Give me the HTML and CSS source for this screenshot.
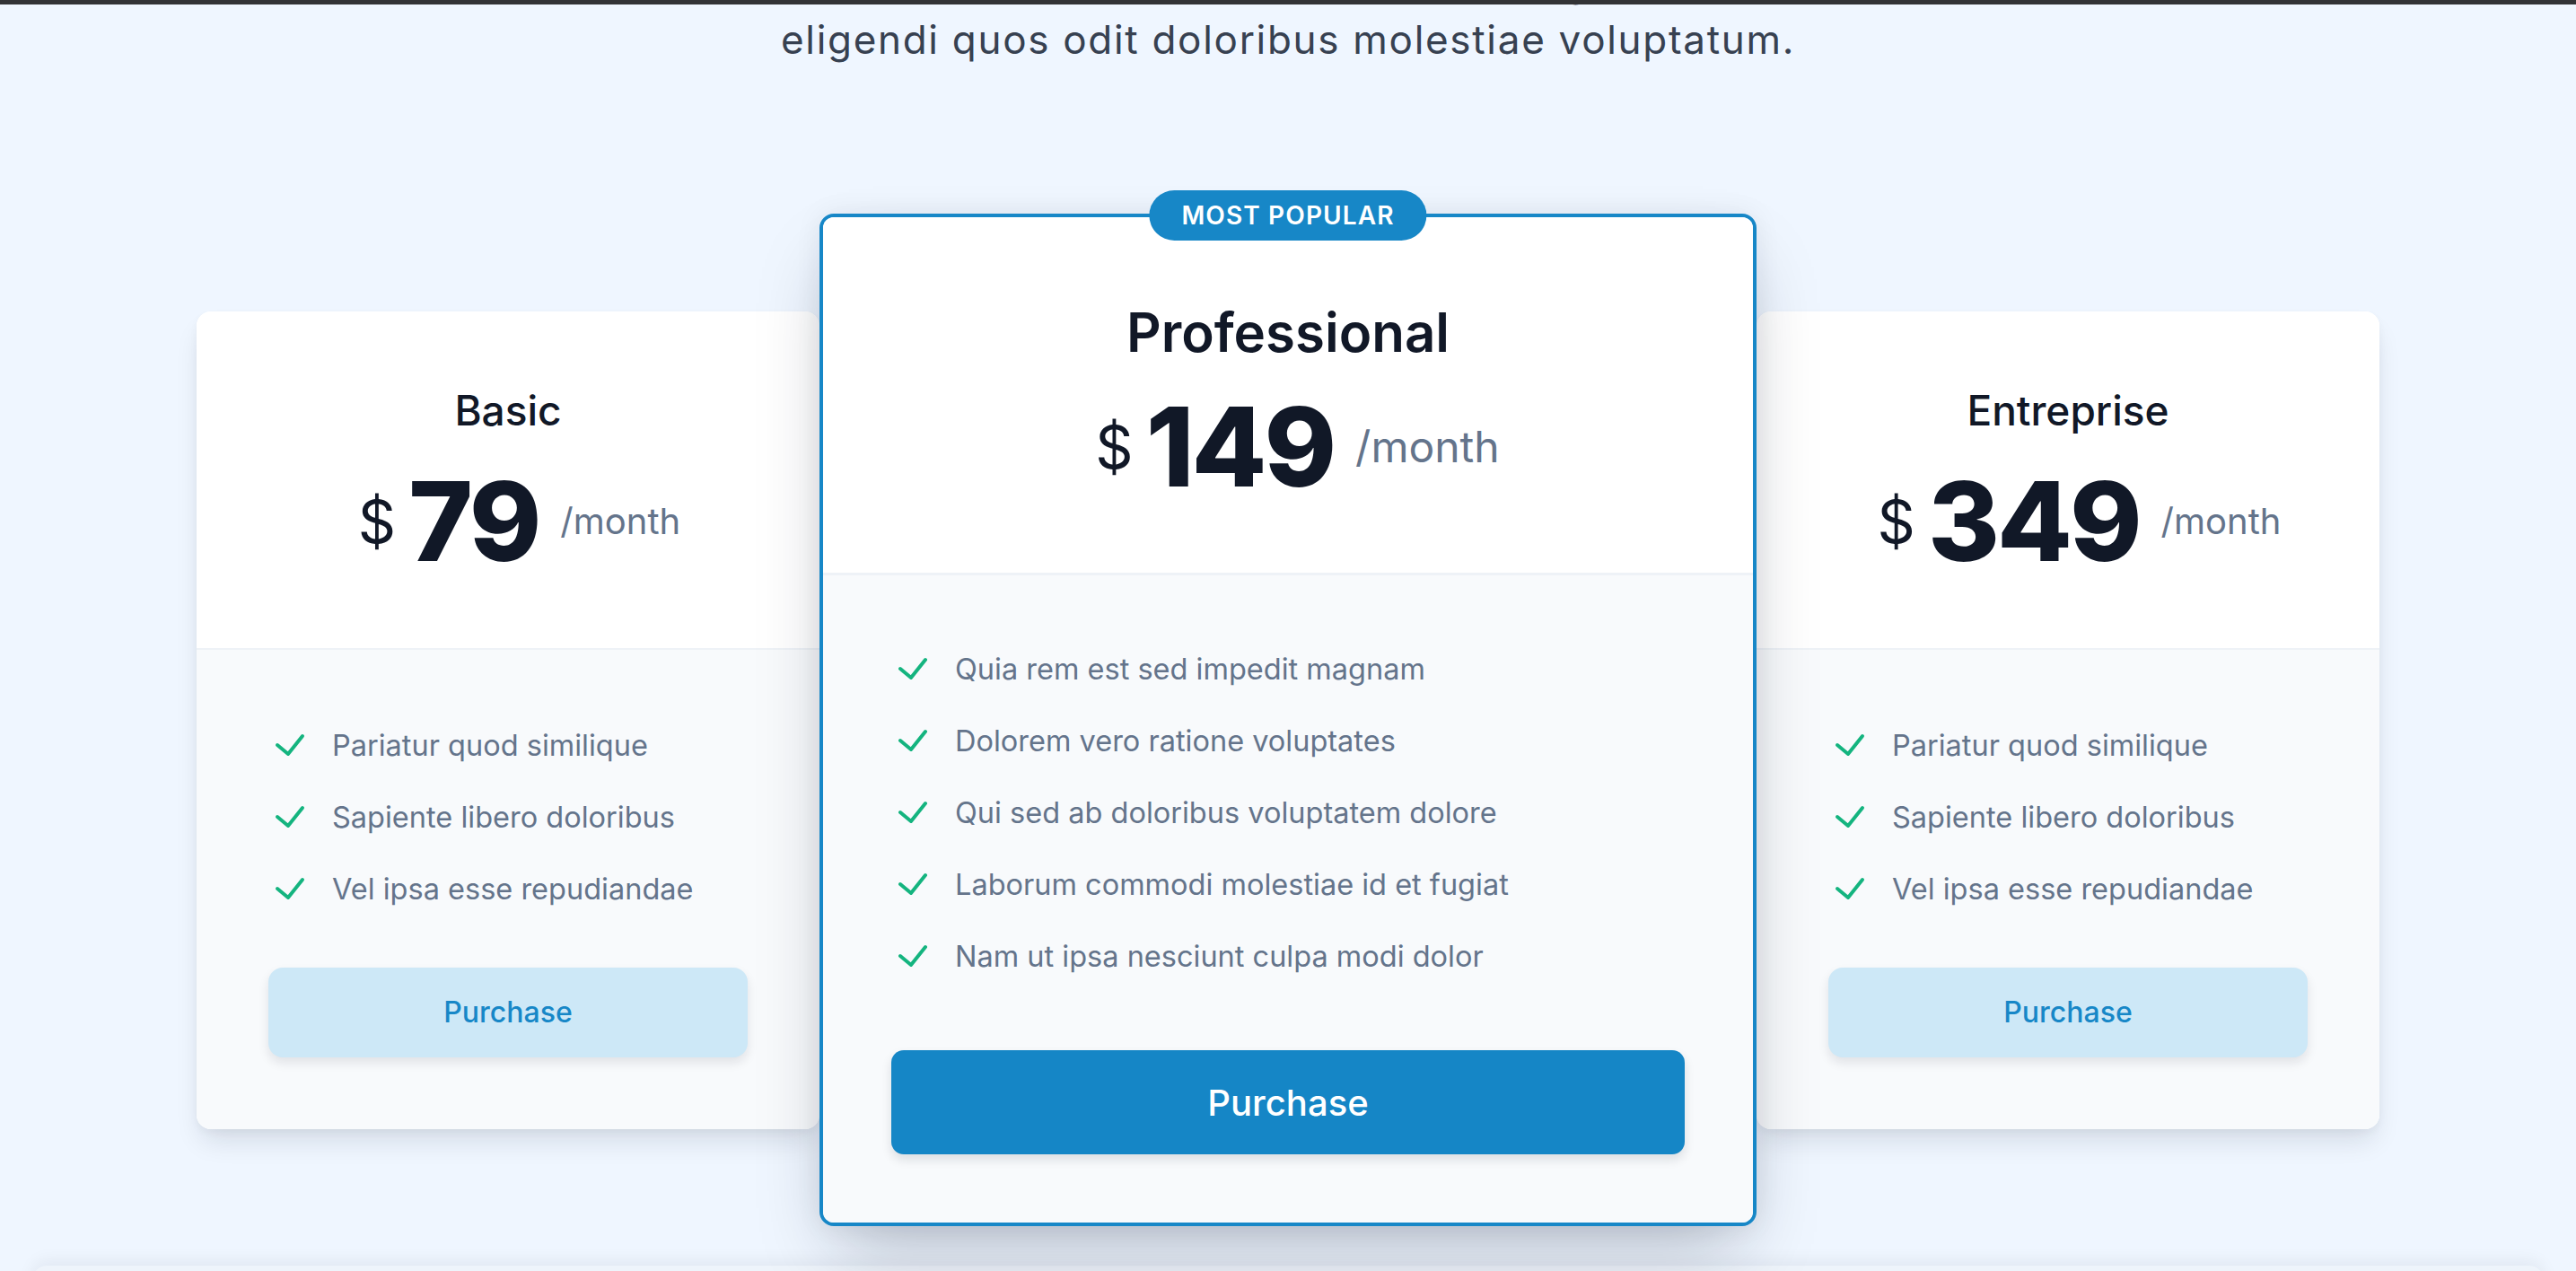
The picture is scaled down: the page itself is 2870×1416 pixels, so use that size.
FILE: index.html
```html
<!DOCTYPE html>
<html lang="en">
<head>
<meta charset="utf-8">
<title>Pricing</title>
<link rel="stylesheet" href="styles.css">
</head>
<body>
<div class="topbar"></div>
<section class="pricing">
  <p class="intro">Lorem ipsum dolor sit amet consectetur adipisicing, quasi sequi pariatur<br>eligendi quos odit doloribus molestiae voluptatum.</p>
  <div class="plans">
    <div class="plan side">
      <div class="plan-head">
        <h3 class="plan-name">Basic</h3>
        <div class="price"><span class="cur">$</span><span class="amt">79</span><span class="per">/month</span></div>
      </div>
      <div class="plan-body">
        <ul class="features">
          <li><svg class="check" viewBox="0 0 48 48"><path d="M10 23 L22 33 L38 13"/></svg><span>Pariatur quod similique</span></li>
          <li><svg class="check" viewBox="0 0 48 48"><path d="M10 23 L22 33 L38 13"/></svg><span>Sapiente libero doloribus</span></li>
          <li><svg class="check" viewBox="0 0 48 48"><path d="M10 23 L22 33 L38 13"/></svg><span>Vel ipsa esse repudiandae</span></li>
        </ul>
        <button class="btn btn-light">Purchase</button>
      </div>
    </div>
    <div class="plan featured">
      <span class="badge">Most popular</span>
      <div class="plan-head">
        <h3 class="plan-name">Professional</h3>
        <div class="price"><span class="cur">$</span><span class="amt">149</span><span class="per">/month</span></div>
      </div>
      <div class="plan-body">
        <ul class="features">
          <li><svg class="check" viewBox="0 0 48 48"><path d="M10 23 L22 33 L38 13"/></svg><span>Quia rem est sed impedit magnam</span></li>
          <li><svg class="check" viewBox="0 0 48 48"><path d="M10 23 L22 33 L38 13"/></svg><span>Dolorem vero ratione voluptates</span></li>
          <li><svg class="check" viewBox="0 0 48 48"><path d="M10 23 L22 33 L38 13"/></svg><span>Qui sed ab doloribus voluptatem dolore</span></li>
          <li><svg class="check" viewBox="0 0 48 48"><path d="M10 23 L22 33 L38 13"/></svg><span>Laborum commodi molestiae id et fugiat</span></li>
          <li><svg class="check" viewBox="0 0 48 48"><path d="M10 23 L22 33 L38 13"/></svg><span>Nam ut ipsa nesciunt culpa modi dolor</span></li>
        </ul>
        <button class="btn btn-primary">Purchase</button>
      </div>
    </div>
    <div class="plan side">
      <div class="plan-head">
        <h3 class="plan-name">Entreprise</h3>
        <div class="price"><span class="cur">$</span><span class="amt">349</span><span class="per">/month</span></div>
      </div>
      <div class="plan-body">
        <ul class="features">
          <li><svg class="check" viewBox="0 0 48 48"><path d="M10 23 L22 33 L38 13"/></svg><span>Pariatur quod similique</span></li>
          <li><svg class="check" viewBox="0 0 48 48"><path d="M10 23 L22 33 L38 13"/></svg><span>Sapiente libero doloribus</span></li>
          <li><svg class="check" viewBox="0 0 48 48"><path d="M10 23 L22 33 L38 13"/></svg><span>Vel ipsa esse repudiandae</span></li>
        </ul>
        <button class="btn btn-light">Purchase</button>
      </div>
    </div>
  </div>
  <div class="next-panel"></div>
</section>
</body>
</html>
```
FILE: styles.css
```css
html, body {
  margin: 0;
  padding: 0;
}
body {
  background: #eff6ff;
  font-family: Inter, "Noto Sans", sans-serif;
  height: 1416px;
  overflow: hidden;
}
.topbar {
  position: fixed;
  top: 0;
  left: 0;
  right: 0;
  height: 5px;
  background: #323336;
  z-index: 10;
}
.pricing {
  padding-top: 1px;
}
.intro {
  margin: -53px auto 0;
  text-align: center;
  font-size: 44px;
  line-height: 64px;
  letter-spacing: 1.7px;
  color: #374151;
}
.plans {
  display: grid;
  grid-template-columns: 694px 1044px 694px;
  justify-content: center;
  align-items: center;
  margin-top: 162px;
}
.plan {
  border-radius: 16px;
}
.plan.side {
  background: #fff;
  overflow: hidden;
  box-shadow: 0 18px 30px -6px rgba(15, 23, 42, 0.12), 0 4px 10px rgba(15, 23, 42, 0.04);
}
.plan.featured {
  position: relative;
  z-index: 2;
  border: 4px solid #1787c7;
  background: #f8fafc;
  box-shadow: 0 40px 80px -20px rgba(15, 23, 42, 0.28), 0 0 30px rgba(15, 23, 42, 0.07);
}
.plan-head {
  background: #fff;
  text-align: center;
  padding: 82px 80px 80px;
}
.featured .plan-head {
  padding: 92px 76px 79px;
  border-radius: 12px 12px 0 0;
}
.plan-name {
  margin: 0;
  font-size: 46px;
  line-height: 57.5px;
  font-weight: 500;
  color: #111827;
}
.featured .plan-name {
  font-size: 60px;
  line-height: 72px;
  font-weight: 600;
}
.price {
  display: flex;
  align-items: center;
  justify-content: center;
  margin-top: 34px;
  padding-left: 25px;
  color: #111827;
}
.featured .price {
  margin-top: 31px;
  padding-left: 21px;
}
.cur {
  font-size: 66px;
  line-height: 1;
}
.amt {
  font-size: 122px;
  line-height: 1;
  font-weight: 800;
  letter-spacing: -0.025em;
  margin-left: 14px;
}
.per {
  font-size: 40px;
  line-height: 1;
  color: #64748b;
  margin-left: 24px;
}
.featured .per {
  font-size: 48px;
}
.plan-body {
  background: #f8fafc;
  border-top: 2px solid #eef2f7;
  padding: 83px 80px 80px;
}
.featured .plan-body {
  border-top-width: 3px;
  padding: 81px 76px 76px;
  border-radius: 0 0 12px 12px;
}
.features {
  list-style: none;
  margin: 0;
  padding: 0;
  display: flex;
  flex-direction: column;
  gap: 32px;
}
.features li {
  display: flex;
  align-items: center;
  font-size: 32.5px;
  line-height: 48px;
  color: #64748b;
}
.check {
  width: 48px;
  height: 48px;
  flex: none;
  margin-right: 23px;
  fill: none;
  stroke: #14b47f;
  stroke-width: 4;
  stroke-linecap: round;
  stroke-linejoin: round;
}
.btn {
  display: block;
  width: 100%;
  border: 0;
  font-family: inherit;
  font-weight: 500;
  cursor: pointer;
}
.btn-light {
  margin-top: 62.5px;
  height: 100px;
  border-radius: 16px;
  background: #cde8f7;
  color: #1787c7;
  font-size: 32px;
  box-shadow: 0 6px 12px rgba(15, 23, 42, 0.1);
}
.btn-primary {
  margin-top: 80px;
  height: 116px;
  border-radius: 14px;
  background: #1586c6;
  color: #fff;
  font-size: 40px;
  box-shadow: 0 6px 12px rgba(15, 23, 42, 0.12);
}
.badge {
  position: absolute;
  top: -30px;
  left: 50%;
  transform: translateX(-50%);
  height: 56px;
  padding: 0 36px;
  display: flex;
  align-items: center;
  border-radius: 28px;
  background: #1787c7;
  color: #fff;
  font-size: 28px;
  font-weight: 600;
  letter-spacing: 0.04em;
  text-transform: uppercase;
  white-space: nowrap;
}
.next-panel {
  margin: 44px 36px 0;
  height: 60px;
  border-radius: 16px 16px 0 0;
  background: #eef4fb;
  box-shadow: 0 -6px 18px rgba(15, 23, 42, 0.06);
}
```
